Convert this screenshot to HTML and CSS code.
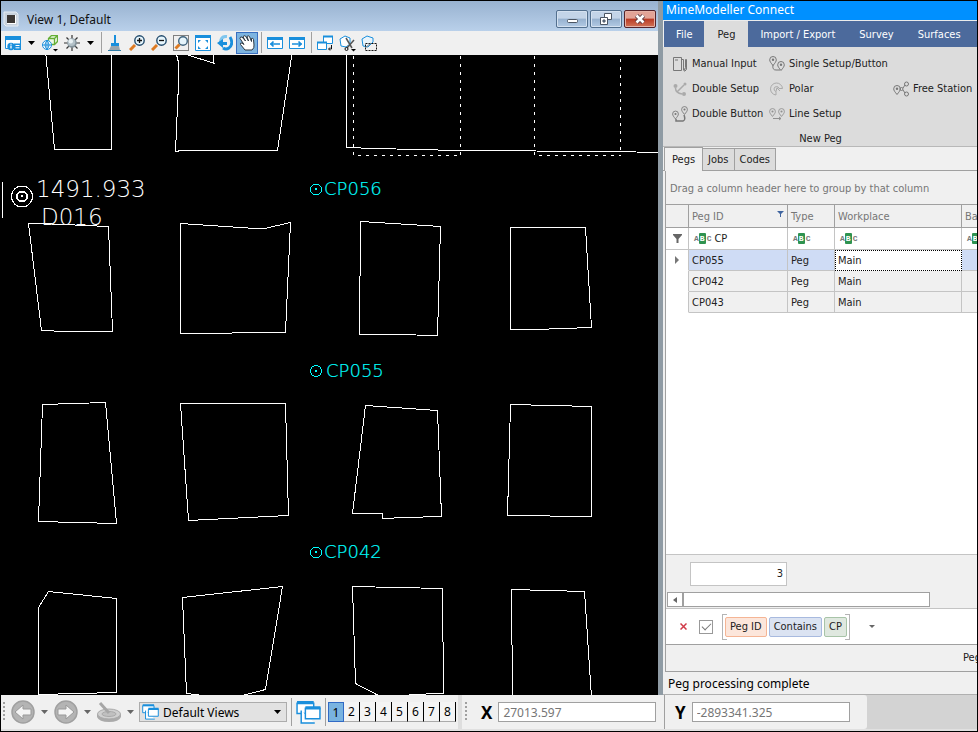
FILE: index.html
```html
<!DOCTYPE html>
<html lang="en">
<head>
<meta charset="utf-8">
<title>MineModeller Connect</title>
<link rel="stylesheet" href="styles.css">
</head>
<body>
<svg class="defs" aria-hidden="true">
  <defs>
    <symbol id="pin" viewBox="0 0 8 10"><path d="M4 9.5 C2 7 .7 5.500 .7 3.800 A3.300 3.300 0 0 1 7.300 3.800 C7.300 5.500 6 7 4 9.500 Z" fill="none" stroke="currentColor"/><circle cx="4" cy="3.800" r="1.200" fill="currentColor"/></symbol>
    <symbol id="views" viewBox="0 0 24 22"><g fill="#fff" stroke="#1a8fdc" stroke-width="1.400"><path d="M1 2h16v10H1z"/><path d="M5 9v12h13"/><path d="M9 7h14v10H9z"/></g><path d="M1 1.500h16M9 6.500h14.500" stroke="#1a8fdc" stroke-width="3"/></symbol>
  </defs>
</svg>
<div class="app">
  <div class="workspace">
    <main class="view">
      <header class="titlebar">
        <svg class="app-icon" width="16" height="16" viewBox="0 0 16 16"><path d="M1 1h12l2 2v12H3l-2-2z" fill="#c8d2dd" stroke="#e6edf5"/><path d="M4 4h9v9H4z" fill="#fff"/><path d="M4 4h8v8H4z" fill="#3c3836"/></svg>
        <h1>View 1, Default</h1>
        <div class="window-buttons">
          <button type="button" aria-label="Minimize"><svg width="12" height="12" viewBox="0 0 12 12"><rect x="1.500" y="6.500" width="10" height="3" rx="1" fill="#fff" stroke="#4b5563"/></svg></button>
          <button type="button" aria-label="Restore"><svg width="12" height="12" viewBox="0 0 12 12"><g fill="#fff" stroke="#4b5563"><path d="M4.500.500h7v6h-7z"/><path d="M.500 4.500h7v7h-7z"/></g><path d="M3 7h2v2H3z" fill="#7b93b0" stroke="#4b5563"/></svg></button>
          <button type="button" class="close" aria-label="Close"><svg width="12" height="12" viewBox="0 0 12 12"><path d="M2.500 2.500l7 7M9.500 2.500l-7 7" stroke="#5a3b42" stroke-width="4.500"/><path d="M2.500 2.500l7 7M9.500 2.500l-7 7" stroke="#fff" stroke-width="2.600"/></svg></button>
        </div>
      </header>
      <div class="toolbar" role="toolbar">
        <button type="button" aria-label="View attributes"><svg width="16" height="16" viewBox="0 0 16 16"><path d="M.500 2.500h15v11H.500z" fill="#fff" stroke="#1a8fdc"/><path d="M0 1h16v4H0z" fill="#1a8fdc"/><circle cx="6" cy="11.500" r="3.700" fill="#1a8fdc"/><path d="M6 10.500v3M6 8.700v1" stroke="#fff" stroke-width="1.300"/><rect x="9" y="8.500" width="7" height="6.500" fill="#1a8fdc"/><path d="M10.500 10.500h4M10.500 12.800h4" stroke="#fff"/></svg></button>
        <button type="button" class="drop" aria-label="View attributes menu"><svg width="7" height="4" viewBox="0 0 7 4"><path d="M0 0h7L3.500 4z"/></svg></button>
        <button type="button" aria-label="Display style"><svg width="16" height="17" viewBox="0 0 16 17"><path d="M6.500 3.500l3-3h6v6l-3 3h-6zM6.500 3.500h6v6M12.500 3.500l3-3" fill="#edf8e5" stroke="#64ae35" stroke-width="1.300"/><circle cx="5" cy="10" r="4.500" fill="#fff" stroke="#1a8fdc"/><path d="M.500 10h9M5 5.500v9M5 5.500q-4 4.500 0 9M5 5.500q4 4.500 0 9" fill="none" stroke="#1a8fdc"/><path d="M11 14h5l-2.500 2.500z"/></svg></button>
        <button type="button" aria-label="Brightness"><svg width="16" height="16" viewBox="0 0 16 16"><path d="M8 0v16M0 8h16M2.500 2.500l11 11M13.500 2.500l-11 11" stroke="#333" stroke-width="1.200"/><circle cx="8" cy="8" r="4.800" fill="#84939b"/><circle cx="7.500" cy="7.300" r="3.800" fill="#b3c1c8"/><circle cx="6.800" cy="6.300" r="2.200" fill="#e8f0f3"/></svg></button>
        <button type="button" class="drop" aria-label="Brightness menu"><svg width="7" height="4" viewBox="0 0 7 4"><path d="M0 0h7L3.500 4z"/></svg></button>
        <span class="sep"></span>
        <button type="button" aria-label="Update view"><svg width="16" height="16" viewBox="0 0 16 16"><path d="M8 0v8" stroke="#1a8fdc" stroke-width="2"/><path d="M4 8h8v3H4z" fill="#1a8fdc"/><path d="M4 11h8l1 4H2z" fill="#9aa5ad"/><path d="M1 15.500h13" stroke="#2e7da8"/></svg></button>
        <button type="button" aria-label="Zoom in"><svg width="16" height="16" viewBox="0 0 16 16"><path d="M1 15l5-5" stroke="#dd7a22" stroke-width="3"/><circle cx="10.500" cy="5.500" r="4.700" fill="#e6f5fc" stroke="#234b6c" stroke-width="1.400"/><path d="M8 5.500h5M10.500 3v5" stroke="#111" stroke-width="1.300"/></svg></button>
        <button type="button" aria-label="Zoom out"><svg width="16" height="16" viewBox="0 0 16 16"><path d="M1 15l5-5" stroke="#dd7a22" stroke-width="3"/><circle cx="10.500" cy="5.500" r="4.700" fill="#e6f5fc" stroke="#234b6c" stroke-width="1.400"/><path d="M8 5.500h5" stroke="#111" stroke-width="1.300"/></svg></button>
        <button type="button" aria-label="Window area"><svg width="16" height="16" viewBox="0 0 16 16"><path d="M.500.500h15v15H.500z" fill="none" stroke="#111" stroke-dasharray="1 1"/><path d="M2.500 13.500l4-4" stroke="#dd7a22" stroke-width="3"/><circle cx="10" cy="6" r="4.300" fill="#e6f5fc" stroke="#41657f" stroke-width="1.400"/></svg></button>
        <button type="button" aria-label="Fit view"><svg width="16" height="16" viewBox="0 0 16 16"><path d="M.500.500h15v15H.500z" fill="#fff" stroke="#1a8fdc"/><path d="M0 0h16v3H0z" fill="#1a8fdc"/><path d="M3 5h3L3 8zM13 5v3l-3-3zM3 14v-3l3 3zM13 14h-3l3-3z" fill="#1a8fdc"/></svg></button>
        <button type="button" aria-label="Rotate view"><svg width="16" height="16" viewBox="0 0 16 16"><path d="M10 1.500Q4 1 3.500 7" fill="none" stroke="#80c6ee" stroke-width="3"/><path d="M13 2q4 7-1 11-3 2-6 0" fill="none" stroke="#1a8fdc" stroke-width="2.800"/><path d="M0 8l6-4v3h4v3H6v3z" fill="#1a8fdc"/></svg></button>
        <button type="button" class="active" aria-label="Pan view" aria-pressed="true"><svg width="16" height="16" viewBox="0 0 16 16"><path d="M6 15L1.500 9.500Q1 7.500 3 8l2 1.500L1 3.500Q1 1.500 3 2l3.500 4L4 1.800Q5 0 6.500 1l3 5L8 1.500Q9 0 10.500 1.500l2 5v-3q1.500-1 2 1L15 10q.5 3-2 5z" fill="#fff" stroke="#2d3740"/></svg></button>
        <span class="sep"></span>
        <button type="button" aria-label="View previous"><svg width="16" height="16" viewBox="0 0 16 16"><path d="M.500 2.500h15v11H.500z" fill="#fff" stroke="#1a8fdc"/><path d="M0 2h16v3H0z" fill="#1a8fdc"/><path d="M3 9h10M6.500 6.500L4 9l2.500 2.500" fill="none" stroke="#1a8fdc" stroke-width="1.700"/></svg></button>
        <button type="button" aria-label="View next"><svg width="16" height="16" viewBox="0 0 16 16"><path d="M.500 2.500h15v11H.500z" fill="#fff" stroke="#1a8fdc"/><path d="M0 2h16v3H0z" fill="#1a8fdc"/><path d="M3 9h10M9.500 6.500L12 9l-2.500 2.500" fill="none" stroke="#1a8fdc" stroke-width="1.700"/></svg></button>
        <span class="sep"></span>
        <button type="button" aria-label="Copy view"><svg width="16" height="16" viewBox="0 0 16 16"><g fill="#fff" stroke="#1a8fdc"><path d="M6.500 1.500h9v7h-9z"/><path d="M.500 7.500h9v7h-9z"/></g><path d="M6 1.500h10M0 7.500h10" stroke="#1a8fdc" stroke-width="2"/><path d="M14.500 10v4H12M13 12.500L11.500 14l1.500 1.500" fill="none" stroke="#111"/></svg></button>
        <button type="button" aria-label="Clip volume"><svg width="17" height="17" viewBox="0 0 17 17"><path d="M1 4l5-3 5 2v6l-4 3-5-1z" fill="#fff" stroke="#1a8fdc"/><path d="M7 3l6 10M15 5l-7 8" stroke="#555" stroke-width="1.500"/><circle cx="7.500" cy="14" r="1.500" fill="none" stroke="#111"/><path d="M12 14h5l-2.500 2.500z"/></svg></button>
        <button type="button" aria-label="Clip mask"><svg width="16" height="16" viewBox="0 0 16 16"><path d="M1 4l5-3 6 2v4l-5 5-5-1z" fill="#e9f4fb" stroke="#1a8fdc"/><path d="M4.500 8.500h11v7h-11z" fill="none" stroke="#111" stroke-dasharray="2 1"/><path d="M4 13l6-5" stroke="#777"/></svg></button>
      </div>
      <div class="canvas">
        <svg viewBox="1 55 657 640" preserveAspectRatio="xMinYMin slice" role="img" aria-label="Pillar and peg plan">
          <g class="pillars" transform="translate(.5 .5)">
            <path d="M45 50 54 149H111V50"/>
            <path d="M175 50 178 62V83L175 151 181 150H277L292 50"/>
            <path d="M186 54 214 63H213V50"/>
            <path d="M346 50V147L375 148 458 150 611 151 660 152"/>
            <path class="dashed" d="M353 47V155H460V47M534 47V155H620V47"/>
            <path d="M28 223 40 223 108 226 112 331H66L41 330z"/>
            <path d="M180 223 255 228H264L290 222 285 332 180 333z"/>
            <path d="M360 221 440 226 437 335 394 334H359z"/>
            <path d="M510 227H585L591 327 535 329H510z"/>
            <path d="M42 404 105 402 116 523 38 521z"/>
            <path d="M180 403H285L288 515 188 520z"/>
            <path d="M365 405 437 410 441 516 405 517 382 518V513H352z"/>
            <path d="M510 404 591 406V516L507 515z"/>
            <path d="M38 607 48 591 116 598V692L38 694z"/>
            <path d="M203 695 186 693 182 597 282 586 265 689 242 695"/>
            <path d="M378 695 355 683 352 586 442 588 443 693 409 694"/>
            <path d="M512 697 511 589 584 591 591 697"/>
            <path d="M1 182H2V217H1"/>
            <circle cx="21.500" cy="196" r="10.500"/>
            <circle cx="21.500" cy="196" r="5" stroke-width="2"/>
            <path d="M21 195h1v1h-1z"/>
          </g>
          <g class="peg-marks" transform="translate(.5 .5)">
            <circle cx="315.500" cy="189" r="5.500"/><path d="M315 188h1v1h-1z"/>
            <circle cx="315.500" cy="370.500" r="5.500"/><path d="M315 370h1v1h-1z"/>
            <circle cx="315.500" cy="552" r="5.500"/><path d="M315 551h1v1h-1z"/>
          </g>
          <g class="survey-text"><text x="36" y="197">1491.933</text><text x="41" y="225">D016</text></g>
          <g class="peg-text"><text x="324" y="195">CP056</text><text x="326" y="377">CP055</text><text x="324" y="558">CP042</text></g>
        </svg>
      </div>
    </main>

    <aside class="connect">
      <h2>MineModeller Connect</h2>
      <nav class="ribbon-tabs">
        <button type="button">File</button>
        <button type="button" class="current">Peg</button>
        <button type="button">Import / Export</button>
        <button type="button">Survey</button>
        <button type="button">Surfaces</button>
      </nav>
      <section class="ribbon">
        <div class="commands">
          <button type="button"><svg width="16" height="16" viewBox="0 0 16 16"><path d="M1.500 1.500h8v13h-8zM3 4h3M9.500 3.500h2v11M13.500 3.500v8l-1 3-1-3M13.500 3.500h1v10l-2 2" fill="none" stroke="currentColor"/></svg>Manual Input</button>
          <button type="button"><svg width="16" height="16" viewBox="0 0 16 16"><use href="#pin" x="0" y="0" width="8" height="10"/><use href="#pin" x="8" y="5" width="8" height="10"/><path d="M4 9q-1 5 3 5h4" fill="none" stroke="currentColor"/></svg>Single Setup/Button</button>
          <span></span>
          <button type="button"><svg class="faint" width="16" height="16" viewBox="0 0 16 16"><circle cx="3.500" cy="5" r="2"/><circle cx="13" cy="3" r="1.500"/><circle cx="12" cy="13" r="2"/><path d="M3.500 7q0 5 6.500 6M5 11l7-7" fill="none" stroke="currentColor" stroke-width="1.500"/></svg>Double Setup</button>
          <button type="button"><svg class="faint" width="16" height="16" viewBox="0 0 16 16"><path d="M7 14A6 6 0 1 1 13.500 7.500H10A2.500 2.500 0 1 0 7 10.500zM7 10.500l1-4M8 7l3 3" fill="none" stroke="currentColor"/></svg>Polar</button>
          <button type="button"><svg width="16" height="16" viewBox="0 0 16 16"><use href="#pin" x="0" y="3" width="8" height="12"/><circle cx="13.500" cy="3" r="2" fill="none" stroke="currentColor"/><circle cx="13.500" cy="13" r="2" fill="none" stroke="currentColor"/><circle cx="8.500" cy="8" r="1.500" fill="none" stroke="currentColor"/><path d="M10 7l2-3M10 9l2 3" stroke="currentColor"/></svg>Free Station</button>
          <button type="button"><svg width="16" height="16" viewBox="0 0 16 16"><use href="#pin" x="0" y="4" width="7" height="10"/><use href="#pin" x="9" y="0" width="7" height="9"/><path d="M4 13v2h7q3-1 1-6" fill="none" stroke="currentColor" stroke-width="1.500"/></svg>Double Button</button>
          <button type="button"><svg class="mid" width="16" height="16" viewBox="0 0 16 16"><use href="#pin" x="0" y="2" width="7" height="9"/><use href="#pin" x="9" y="2" width="7" height="9"/><path d="M4 12.500h8M10 11l2 1.500-2 1.500" fill="none" stroke="currentColor"/></svg>Line Setup</button>
        </div>
        <p class="caption">New Peg</p>
      </section>
      <nav class="page-tabs">
        <button type="button" class="current">Pegs</button><button type="button">Jobs</button><button type="button">Codes</button>
      </nav>
      <section class="grid-panel">
        <p class="group-bar">Drag a column header here to group by that column</p>
        <div class="table-wrap">
          <table>
            <colgroup><col class="c-mark"><col class="c-id"><col class="c-type"><col class="c-place"><col></colgroup>
            <thead>
              <tr><th></th><th><span class="head">Peg ID<svg width="7" height="8" viewBox="0 0 7 8"><path d="M0 1h7L4 4v3H3V4z" fill="#3f649f"/></svg></span></th><th>Type</th><th>Workplace</th><th>Ba</th></tr>
              <tr class="filters">
                <td class="mark"><svg width="9" height="9" viewBox="0 0 9 9"><path d="M0 0h9v1L5.500 5v4h-2V5L0 1z" fill="#666"/></svg></td>
                <td><label><span class="abc">A<b>B</b>C</span><input type="text" value="CP"></label></td>
                <td><label><span class="abc">A<b>B</b>C</span><input type="text"></label></td>
                <td><label><span class="abc">A<b>B</b>C</span><input type="text"></label></td>
                <td><label><span class="abc">A<b>B</b></span><input type="text"></label></td>
              </tr>
            </thead>
            <tbody>
              <tr class="selected"><td class="mark"><svg width="4" height="8" viewBox="0 0 4 8"><path d="M0 0l4 4-4 4z" fill="#777"/></svg></td><td>CP055</td><td>Peg</td><td class="focus">Main</td><td></td></tr>
              <tr><td class="mark"></td><td>CP042</td><td>Peg</td><td>Main</td><td></td></tr>
              <tr><td class="mark"></td><td>CP043</td><td>Peg</td><td>Main</td><td></td></tr>
            </tbody>
          </table>
        </div>
        <div class="summary"><output>3</output></div>
        <div class="hscroll"><button type="button" aria-label="Scroll left"><svg width="4" height="6" viewBox="0 0 4 6"><path d="M4 0v6L0 3z" fill="#666"/></svg></button><span class="thumb"></span></div>
        <div class="filter-bar">
          <button type="button" class="clear" aria-label="Clear filter"><svg width="7" height="7" viewBox="0 0 7 7"><path d="M.500.500l6 6M6.500.500l-6 6" stroke="#d03a48" stroke-width="1.500"/></svg></button>
          <input type="checkbox" checked aria-label="Filter enabled">
          <div class="expression"><button type="button" class="field">Peg ID</button><button type="button" class="operator">Contains</button><button type="button" class="value">CP</button></div>
          <button type="button" class="more" aria-label="Recent filters"><svg width="6" height="3" viewBox="0 0 6 3"><path d="M0 0h6L3 3z" fill="#666"/></svg></button>
        </div>
        <div class="pager"><span>Peg</span></div>
      </section>
      <p class="status">Peg processing complete</p>
    </aside>
  </div>

  <footer class="bottom">
    <div class="nav-tools">
      <span class="grip"></span>
      <button type="button" class="round" aria-label="Previous model"><svg width="24" height="24" viewBox="0 0 24 24"><circle cx="12" cy="12" r="11" fill="#b4b4b4" stroke="#a0a0a0" stroke-width="1.500"/><path d="M4 12l8-7v4h8v6h-8v4z" fill="#f4f4f4" stroke="#999"/></svg></button>
      <button type="button" class="arrow" aria-label="Previous list"><svg width="7" height="4" viewBox="0 0 7 4"><path d="M0 0h7L3.500 4z" fill="#666"/></svg></button>
      <button type="button" class="round" aria-label="Next model"><svg width="24" height="24" viewBox="0 0 24 24"><circle cx="12" cy="12" r="11" fill="#b4b4b4" stroke="#a0a0a0" stroke-width="1.500"/><path d="M20 12l-8-7v4H4v6h8v4z" fill="#f4f4f4" stroke="#999"/></svg></button>
      <button type="button" class="arrow" aria-label="Next list"><svg width="7" height="4" viewBox="0 0 7 4"><path d="M0 0h7L3.500 4z" fill="#666"/></svg></button>
      <button type="button" class="round" aria-label="Active depth"><svg width="24" height="24" viewBox="0 0 24 24"><path d="M0 14v3q2 5 12 5t12-5v-3" fill="#aaa"/><ellipse cx="12" cy="14" rx="11.500" ry="5" fill="#d0d0d0" stroke="#aaa"/><ellipse cx="12" cy="14" rx="7" ry="2.500" fill="#c0c0c0" stroke="#aaa"/><path d="M3 3l9 10" stroke="#a6a6a6" stroke-width="3"/></svg></button>
      <button type="button" class="arrow" aria-label="Depth list"><svg width="7" height="4" viewBox="0 0 7 4"><path d="M0 0h7L3.500 4z" fill="#666"/></svg></button>
      <div class="view-select">
        <svg width="17" height="16"><use href="#views"/></svg>
        <select aria-label="View group"><option>Default Views</option></select>
        <svg class="caret" width="7" height="4" viewBox="0 0 7 4"><path d="M0 0h7L3.500 4z"/></svg>
      </div>
      <span class="rule"></span>
      <button type="button" class="manage" aria-label="Manage view groups"><svg width="25" height="23"><use href="#views"/></svg></button>
      <span class="rule"></span>
      <div class="numbers"><button type="button" class="on">1</button><button type="button">2</button><button type="button">3</button><button type="button">4</button><button type="button">5</button><button type="button">6</button><button type="button">7</button><button type="button">8</button></div>
      <span class="gutter"></span>
      <span class="grip"></span>
      <label for="coord-x">X</label><input id="coord-x" type="text" value="27013.597">
    </div>
    <div class="y-tools">
      <div><label for="coord-y">Y</label><input id="coord-y" type="text" value="-2893341.325"></div>
    </div>
  </footer>
</div>
</body>
</html>
```
FILE: styles.css
```css
* { box-sizing: border-box; }
body {
  margin: 0;
  color: #222;
  font-family: "DejaVu Sans Condensed", "DejaVu Sans", sans-serif;
  font-size: 11px;
}
h1, h2, p { margin: 0; font-weight: 400; }
button, input, select { margin: 0; padding: 0; border: 0; background: none; color: inherit; font: inherit; border-radius: 0; outline: 0; }
svg { display: block; flex: none; }
.defs { position: absolute; width: 0; height: 0; }

.app { display: flex; flex-direction: column; min-height: 100vh; border: 1px solid #000; background: #f0f0f0; overflow: hidden; }
.workspace { display: flex; flex: 1; }
.view { display: flex; flex: 1; flex-direction: column; min-width: 0; }
.connect { display: flex; flex: 0 0 319px; flex-direction: column; min-width: 0; border-left: 5px solid #8f9ba4; }

/* View window */
.titlebar { display: flex; align-items: center; height: 30px; padding: 6px 2px 0 2px; background: linear-gradient(#98b2d0, #b9d0ea); }
.titlebar h1 { flex: 1; margin-left: 8px; color: #111; font: 12px "Noto Sans", sans-serif; }
.window-buttons { display: flex; gap: 2px; }
.window-buttons button { display: grid; place-items: center; width: 32px; height: 18px; border: 1px solid #53708f; border-radius: 2px; background: linear-gradient(#c3d4e8 45%, #96b1cf 50%, #b3cae4); box-shadow: inset 0 0 0 1px #d4e1f0; }
.window-buttons .close { border-color: #55232a; background: linear-gradient(#e2a396 45%, #b93a24 50%, #d27458); box-shadow: inset 0 0 0 1px #e5b2a6; }
.toolbar { display: flex; height: 24px; padding-left: 1px; background: #f0f0f0; }
.toolbar button { display: grid; place-items: center; width: 22px; height: 24px; }
.toolbar .drop { width: 15px; }
.toolbar .active { border: 1px solid #3a6fc0; background: #7db4e0; height: 22px; margin-top: 1px; }
.sep { width: 1px; margin: 1px 2px 2px 3px; background: #a0a0a0; }
.canvas { position: relative; flex: 1; background: #000; overflow: hidden; }
.canvas svg { position: absolute; inset: 0; width: 100%; height: 100%; }
.pillars, .peg-marks { fill: none; stroke: #fff; stroke-width: 1; shape-rendering: crispEdges; }
.peg-marks { stroke: #0ff; }
.dashed { stroke-dasharray: 3 5; }
.survey-text, .peg-text { font-family: "DejaVu Sans Light", "DejaVu Sans", sans-serif; font-weight: 200; }
.survey-text { fill: #fff; font-size: 23px; }
.peg-text { fill: #0ff; stroke: #0ff; stroke-width: .2; font-size: 18px; }

/* Connect panel */
.connect h2 { height: 19px; padding-left: 3px; background: #0090ff; color: #fff; font: 12px/18px "Noto Sans", sans-serif; }
.ribbon-tabs { display: flex; height: 27px; margin-left: 1px; border-top: 1px solid #ececec; background: #4c6a9c; overflow: hidden; }
.ribbon-tabs button { flex: none; padding: 0 12px; color: #fff; white-space: nowrap; }
.ribbon-tabs .current { padding: 0 13px; background: #dcdcdc; color: #222; }
.ribbon { height: 100px; padding: 4px 0 0 9px; border-bottom: 1px solid #b8b8b8; background: #dcdcdc; overflow: hidden; }
.commands { display: grid; grid-template-columns: 97px 124px 90px; grid-auto-rows: 25px; }
.commands button { display: flex; align-items: center; gap: 4px; white-space: nowrap; }
.commands svg { color: #777; fill: currentColor; }
.commands .faint { color: #aaa; }
.commands .mid { color: #909090; }
.caption { height: 25px; line-height: 25px; padding-right: 8px; text-align: center; }
.page-tabs { display: flex; align-items: flex-end; height: 24px; padding-left: 1px; border-bottom: 1px solid #a0a0a0; }
.page-tabs button { height: 22px; padding: 0 5px; border: 1px solid #a0a0a0; border-left: 0; border-bottom: 0; background: #dcdcdc; }
.page-tabs .current { height: 24px; padding: 0 7px; border-left: 1px solid #a0a0a0; background: #f0f0f0; margin-bottom: -1px; }
.grid-panel { display: flex; flex: 1; flex-direction: column; min-height: 0; margin-left: 2px; border-left: 1px solid #a0a0a0; }
.group-bar { height: 34px; padding-left: 4px; border-bottom: 1px solid #a0a0a0; color: #767676; line-height: 36px; white-space: nowrap; }
.table-wrap { flex: 1; background: #fff; overflow: hidden; }
table { width: 100%; table-layout: fixed; border-collapse: separate; border-spacing: 0; }
.c-mark { width: 23px; }
.c-id { width: 99px; }
.c-type { width: 47px; }
.c-place { width: 127px; }
th, td { height: 21px; padding: 0 3px; border-right: 1px solid #c4c4c4; border-bottom: 1px solid #c4c4c4; text-align: left; font-weight: 400; overflow: hidden; white-space: nowrap; }
th { height: 23px; border-color: #a0a0a0; background: #f0f0f0; color: #767676; }
tr > :last-child { border-right: 0; }
.head { display: flex; justify-content: space-between; }
.filters td { height: 22px; background: #fff; }
tbody td { background: #f0f0f0; }
.mark svg { margin: 0 auto; }
.filters label { display: flex; align-items: center; gap: 3px; padding-left: 2px; }
.filters input { width: 100%; min-width: 0; height: 20px; }
.abc { display: flex; align-items: center; color: #777; font: 700 8px/11px "Liberation Mono", monospace; }
.abc b { padding: 0 1px; margin-right: 1px; border-radius: 1px; background: #2f9350; color: #fff; }
.selected td { background: #cfdcf5; }
tbody td.mark { background: #fff; border-bottom-color: #fff; }
.selected .focus { border: 1px dotted #000; background: #fff; padding-left: 2px; }
.summary { height: 38px; padding: 7px 0 0 24px; border-top: 1px solid #c4c4c4; }
.summary output { display: block; width: 97px; height: 24px; padding-right: 3px; border: 1px solid #c4c4c4; background: #fff; line-height: 22px; text-align: right; }
.hscroll { display: flex; height: 17px; padding: 0 47px 1px 1px; border-bottom: 1px solid #c4c4c4; }
.hscroll button { display: grid; place-items: center; width: 16px; border: 1px solid #a0a0a0; background: #fff; }
.thumb { flex: 1; border: 1px solid #a0a0a0; background: #fff; }
.filter-bar { display: flex; align-items: center; height: 36px; padding-left: 14px; border-bottom: 1px solid #a0a0a0; background: #fff; }
.clear { width: 7px; }
.filter-bar input { display: grid; place-items: center; width: 14px; height: 14px; margin: 0 9px 0 12px; border: 1px solid #999; appearance: none; }
.filter-bar input:checked::before { width: 8px; height: 4px; margin-top: -3px; border: solid #777; border-width: 0 0 1px 1px; content: ""; transform: rotate(-45deg); }
.expression { display: flex; gap: 2px; position: relative; padding: 3px 3px; }
.expression::before, .expression::after { position: absolute; top: 0; bottom: 0; width: 4px; border: 1px solid #b4b4b4; content: ""; }
.expression::before { left: 0; border-right: 0; }
.expression::after { right: 0; border-left: 0; }
.expression button { position: relative; height: 20px; padding: 0 4px; border: 1px solid; border-radius: 2px; }
.expression .field { border-color: #f5b595; background: #fce6db; }
.expression .operator { border-color: #a8badf; background: #dbe3f2; }
.expression .value { border-color: #a8c4a8; background: #dfe8df; }
.more { margin-left: 19px; }
.pager { height: 27px; border-bottom: 1px solid #a0a0a0; line-height: 26px; overflow: hidden; }
.pager span { display: block; width: 14px; margin-left: auto; overflow: hidden; }
.status { height: 23px; padding-left: 5px; border-bottom: 1px solid #b0b0b0; color: #000; font: 12px/23px "Noto Sans", sans-serif; }

/* Bottom bar */
.bottom { display: flex; height: 36px; border-bottom: 2px solid #e0e0e0; font: 12px "Noto Sans", sans-serif; }
.nav-tools { display: flex; flex: 1; align-items: center; min-width: 0; padding: 0 8px 0 2px; }
.nav-tools button { flex: none; }
.grip { width: 2px; height: 20px; margin-right: 6px; background: repeating-linear-gradient(#a0a0a0 0 2px, #f0f0f0 2px 4px); }
.round { width: 24px; }
.arrow { display: grid; place-items: center; width: 19px; }
.view-select { position: relative; display: flex; align-items: center; width: 148px; margin-left: -1px; }
.view-select svg { position: absolute; left: 3px; }
.view-select .caret { right: 6px; left: auto; pointer-events: none; }
.view-select select { width: 100%; height: 20px; padding-left: 23px; border: 1px solid #acacac; background: #e2e2e2; color: #000; appearance: none; }
.rule { width: 1px; height: 28px; margin: 0 2px 0 4px; background: #a0a0a0; }
.manage { width: 27px; padding-left: 2px; }
.numbers { display: flex; }
.numbers button { width: 16px; height: 20px; border-right: 1px solid #000; border-bottom: 1px solid #aaa; background: #f4f4f4; color: #000; }
.numbers .on { border: 1px solid #316ac5; background: #79b3e0; }
.gutter { width: 4px; height: 34px; margin: 0 3px 0 2px; background: #dedede; }
.bottom label { color: #000; font: 700 17px "Noto Sans", sans-serif; }
.bottom input { height: 20px; padding-left: 4px; border: 1px solid #a0a0a0; background: #fff; color: #767676; }
.nav-tools label { margin: 0 6px 0 8px; }
.nav-tools input { flex: 1; min-width: 0; }
.y-tools { flex: 0 0 313px; border-left: 1px solid #a0a0a0; background: #d3d3d3; }
.y-tools div { display: flex; align-items: center; width: 202px; height: 34px; padding-left: 10px; border-radius: 0 3px 3px 0; background: #f0f0f0; }
.y-tools input { width: 158px; margin-left: 6px; }
```
